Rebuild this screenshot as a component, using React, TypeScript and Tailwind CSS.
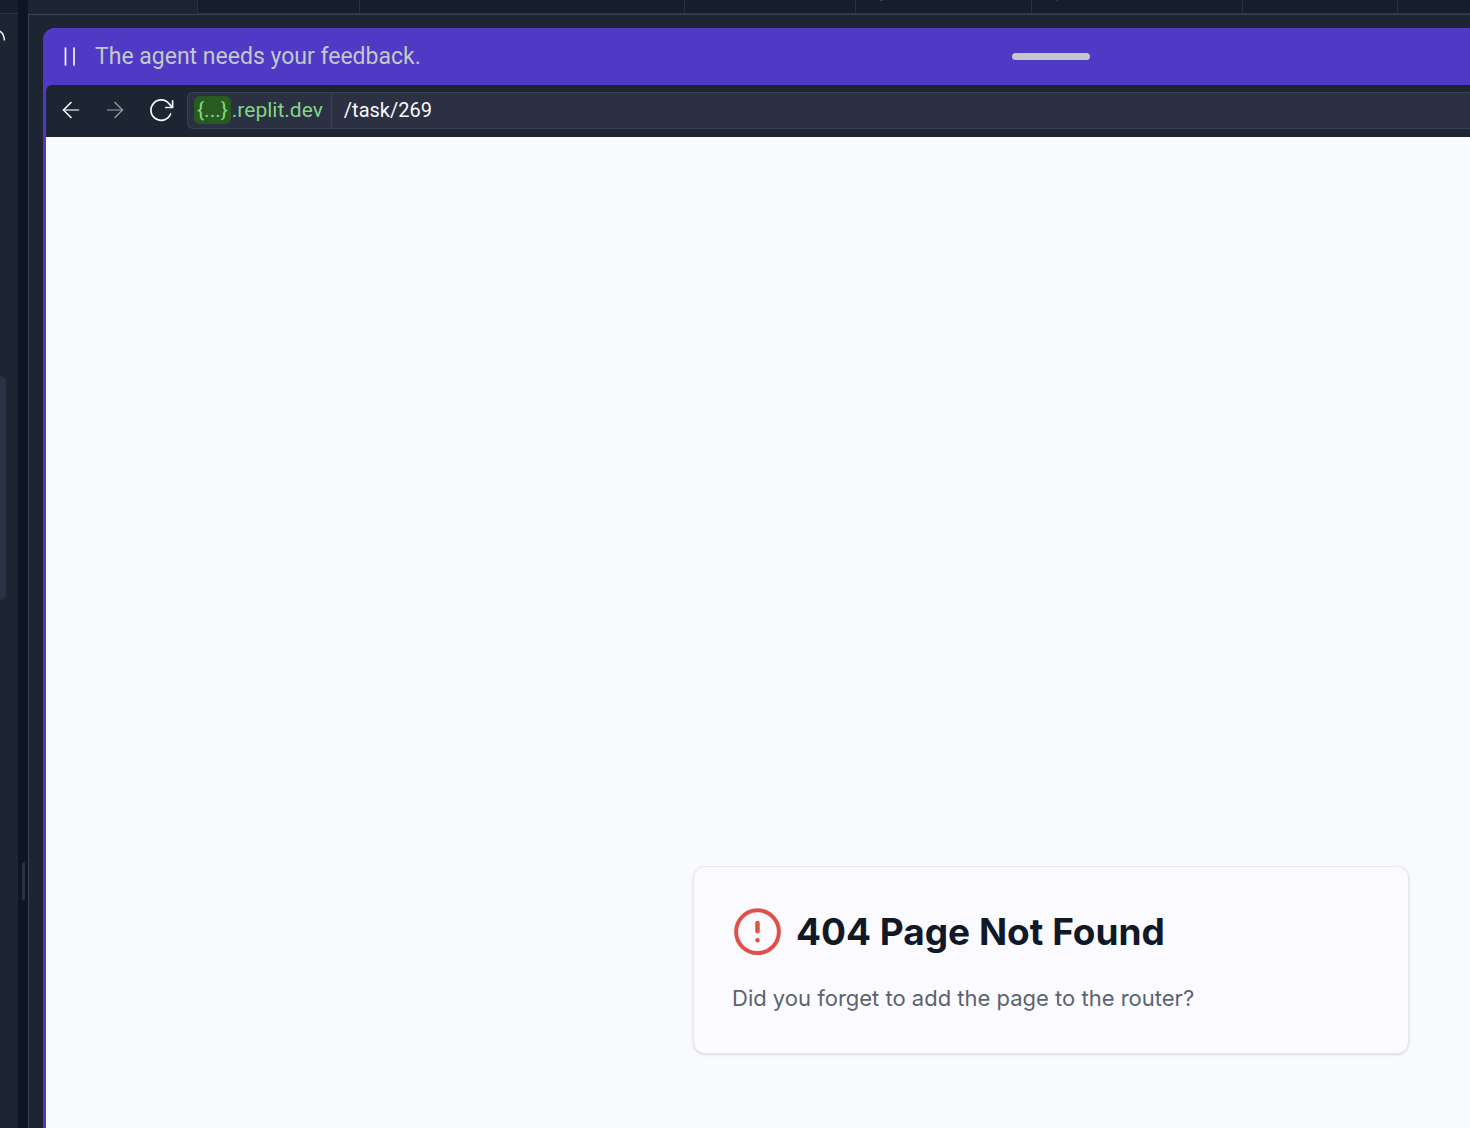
import React from "react";

const tabs = [
  { name: "Tab 2", width: "w-[162px]" },
  { name: "Tab 3", width: "w-[325px]" },
  { name: "Tab 4", width: "w-[171px]" },
  { name: "Tab 5", width: "w-[176px]", mark: "w-[3px]" },
  { name: "Tab 6", width: "w-[211px]", mark: "w-px" },
  { name: "Tab 7", width: "w-[155px]" },
];

function Sidebar() {
  return (
    <aside className="flex w-[18px] shrink-0 flex-col bg-[#1d2432]">
      <div className="h-[14px] border-b border-[#2b3245] bg-[#171e2b]" />
      <svg className="mt-4 h-3 w-[6px]" viewBox="0 0 6 12" fill="none" stroke="#f5f9fc" strokeWidth="1.5" aria-hidden="true">
        <path d="M-1 .8C2 2 4.2 5 4.4 10.5" />
      </svg>
      <div className="mt-[334px] h-[224px] w-[6px] rounded-r-lg bg-[#2b3245]" />
    </aside>
  );
}

function TabStrip() {
  return (
    <div role="tablist" className="flex h-[14px] bg-[#1d2432]">
      <button role="tab" aria-selected="true" aria-label="Preview" className="w-[170px] shrink-0 border-r border-[#2b3245]" />
      {tabs.map((tab) => (
        <button
          key={tab.name}
          role="tab"
          aria-selected="false"
          aria-label={tab.name}
          className={`flex shrink-0 items-start border-r border-b border-[#2b3245] bg-[#171e2b] pl-[24px] ${tab.width}`}
        >
          {tab.mark && <span className={`h-px bg-[#3c4454] ${tab.mark}`} />}
        </button>
      ))}
      <div className="flex-1 border-b border-[#2b3245] bg-[#171e2b]" />
    </div>
  );
}

function FeedbackBar() {
  return (
    <header className="flex h-[57px] items-center justify-between bg-[#4f39c5] pr-[380px] pl-[20px]">
      <div className="flex items-center gap-[18px]">
        <svg className="h-5 w-[14px]" viewBox="0 0 14 20" stroke="#f5f9fc" strokeWidth="1.7" strokeLinecap="round" aria-hidden="true">
          <path d="M2.5 1v17M11 1v17" />
        </svg>
        <p className="text-[23px] leading-8 whitespace-nowrap text-[#c2c8cc]">The agent needs your feedback.</p>
      </div>
      <div className="h-[7px] w-[78px] rounded-full bg-[#c2c8cc]" />
    </header>
  );
}

function Toolbar() {
  return (
    <nav className="flex h-[52px] items-center rounded-tl-md bg-[#1d2432] pb-[2px] pl-[12px]">
      <button aria-label="Back" className="grid size-[26px] place-items-center">
        <svg className="size-[18px]" viewBox="0 0 18 18" fill="none" strokeWidth="1.6" strokeLinecap="round" strokeLinejoin="round">
          <path d="M1.5 9h15" stroke="#c2c8cc" />
          <path d="M9 1.5L1.5 9 9 16.5" stroke="#f5f9fc" />
        </svg>
      </button>
      <button aria-label="Forward" className="ml-[18px] grid size-[26px] place-items-center">
        <svg className="size-[18px]" viewBox="0 0 18 18" fill="none" strokeWidth="1.5" strokeLinecap="round" strokeLinejoin="round">
          <path d="M1.5 9h15" stroke="#777d82" />
          <path d="M9 1.5L16.5 9 9 16.5" stroke="#92989d" />
        </svg>
      </button>
      <button aria-label="Reload" className="ml-[20px] grid size-[26px] place-items-center">
        <svg className="size-[26px]" viewBox="0 0 26 26" fill="none" stroke="#f5f9fc" strokeWidth="1.7" strokeLinecap="round" strokeLinejoin="round">
          <path d="M24.6 3.8v6.7h-6.7" />
          <path d="M24.3 10.2L21.2 6.9A10.2 10.2 0 1 0 22.6 17" />
        </svg>
      </button>
      <div className="ml-[13px] flex h-[37px] min-w-0 flex-1 items-stretch rounded-l-md border border-r-0 border-[#3a4155] bg-[#2b3042]">
        <button className="flex items-center border-r border-[#3a4155] pr-[8px] pl-[6px] text-[21px] leading-[28px] text-[#83d583]">
          <span className="rounded-md bg-[#285b20] px-[3px]">{"{...}"}</span>
          <span className="pl-px">.replit.dev</span>
        </button>
        <input aria-label="Page path" defaultValue="/task/269" className="min-w-0 flex-1 bg-transparent pl-[12px] text-[20px] leading-[28px] text-[#f5f9fc] outline-none" />
      </div>
    </nav>
  );
}

function NotFoundCard() {
  return (
    <section className="w-[716px] rounded-xl border border-[#e5e7eb] bg-[#fbfbff] pt-[40px] pb-[38px] pl-[38px] shadow-sm">
      <div className="flex items-center gap-[14px]">
        <svg className="size-[50px] shrink-0" viewBox="0 0 50 50" fill="none" stroke="#df5049" strokeWidth="4" strokeLinecap="round" aria-hidden="true">
          <circle cx="25.5" cy="24.7" r="21.4" />
          <path d="M25.5 16v8.3M25.5 33.2h.01" strokeWidth="4.5" />
        </svg>
        <h1 className="font-[Inter,sans-serif] text-[37px] leading-[50px] font-bold whitespace-nowrap text-[#111827]">404 Page Not Found</h1>
      </div>
      <p className="mt-[24px] font-[Inter,sans-serif] text-[22px] leading-[34px] text-[#5b6370]">Did you forget to add the page to the router?</p>
    </section>
  );
}

export default function App() {
  return (
    <div className="flex min-h-screen overflow-hidden bg-[#0e1523] font-[Roboto,sans-serif]">
      <Sidebar />
      <div className="flex w-[10px] shrink-0 flex-col items-end justify-end pr-[3px] pb-[228px]">
        <div className="h-[38px] w-[3px] rounded-full bg-[#2b3245]" />
      </div>
      <div className="flex min-w-0 flex-1 flex-col">
        <TabStrip />
        <div className="flex flex-1 flex-col border-t border-l border-[#3c4450] bg-[#1d2432] pt-[13px] pl-[14px]">
          <div className="flex flex-1 flex-col overflow-hidden rounded-tl-xl bg-[#4f39c5]">
            <FeedbackBar />
            <div className="flex flex-1 flex-col pl-[3px]">
              <Toolbar />
              <main className="flex flex-1 items-end justify-end bg-[#f9fafb] pr-[61px] pb-[74px]">
                <NotFoundCard />
              </main>
            </div>
          </div>
        </div>
      </div>
    </div>
  );
}
